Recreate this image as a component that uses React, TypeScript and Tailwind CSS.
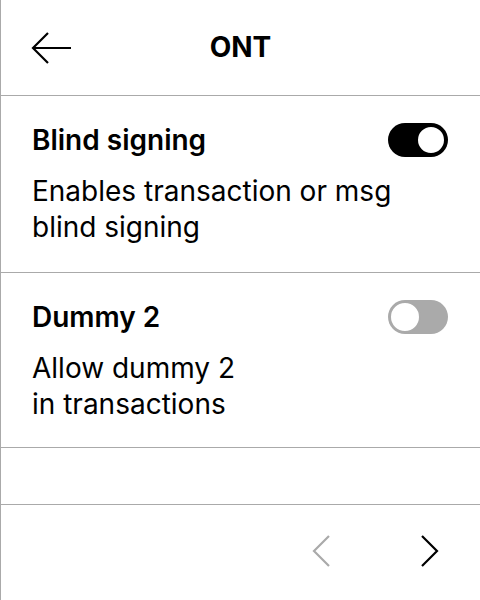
import React from "react";

function Toggle({ on }: { on: boolean }) {
  if (on) {
    return (
      <div className="flex h-[34px] w-[60px] shrink-0 items-center justify-end rounded-full bg-black p-[2px]">
        <div className="h-[30px] w-[30px] rounded-full border-2 border-black bg-white" />
      </div>
    );
  }
  return (
    <div className="flex h-[34px] w-[60px] shrink-0 items-center justify-start rounded-full bg-[#aaaaaa] p-[1px]">
      <div className="h-[32px] w-[32px] rounded-full border-2 border-[#aaaaaa] bg-white" />
    </div>
  );
}

function Setting({
  title,
  lines,
  on,
  className,
}: {
  title: string;
  lines: string[];
  on: boolean;
  className: string;
}) {
  return (
    <div className={`border-b border-[#aaaaaa] pl-[31px] pr-[32px] ${className}`}>
      <div className="flex items-center justify-between">
        <div className="text-[28px] font-semibold leading-[34px] text-black">{title}</div>
        <Toggle on={on} />
      </div>
      <div className="mt-[16px] text-[28px] leading-[36px] text-black">
        {lines.map((l) => (
          <div key={l}>{l}</div>
        ))}
      </div>
    </div>
  );
}

export default function App() {
  return (
    <div
      className="flex h-[600px] w-[480px] flex-col overflow-hidden border-l border-[#aaaaaa] bg-white"
      style={{ fontFamily: "Inter, 'Noto Sans', sans-serif" }}
    >
      {/* header */}
      <div className="relative flex h-[96px] shrink-0 items-center border-b border-[#aaaaaa] px-[30px]">
        <svg width="42" height="34" viewBox="0 0 42 34" fill="none" stroke="black" strokeWidth="2.2">
          <path d="M2 17H40" />
          <path d="M17 2L2 17L17 32" />
        </svg>
        <div className="absolute inset-x-0 top-[30px] text-center text-[28px] font-bold leading-[34px] text-black">
          ONT
        </div>
      </div>

      <Setting
        title="Blind signing"
        lines={["Enables transaction or msg", "blind signing"]}
        on={true}
        className="h-[177px] pt-[27px]"
      />
      <Setting
        title="Dummy 2"
        lines={["Allow dummy 2", "in transactions"]}
        on={false}
        className="h-[175px] pt-[27px]"
      />

      <div className="h-[57px] shrink-0 border-b border-[#aaaaaa]" />

      {/* footer nav */}
      <div className="flex flex-1 items-center justify-end gap-[89px] pr-[40px] pb-[4px]">
        <svg width="20" height="32" viewBox="0 0 20 32" fill="none" stroke="#aaaaaa" strokeWidth="2.2">
          <path d="M18 1L3 16L18 31" />
        </svg>
        <svg width="20" height="32" viewBox="0 0 20 32" fill="none" stroke="black" strokeWidth="2.2">
          <path d="M2 1L17 16L2 31" />
        </svg>
      </div>
    </div>
  );
}
